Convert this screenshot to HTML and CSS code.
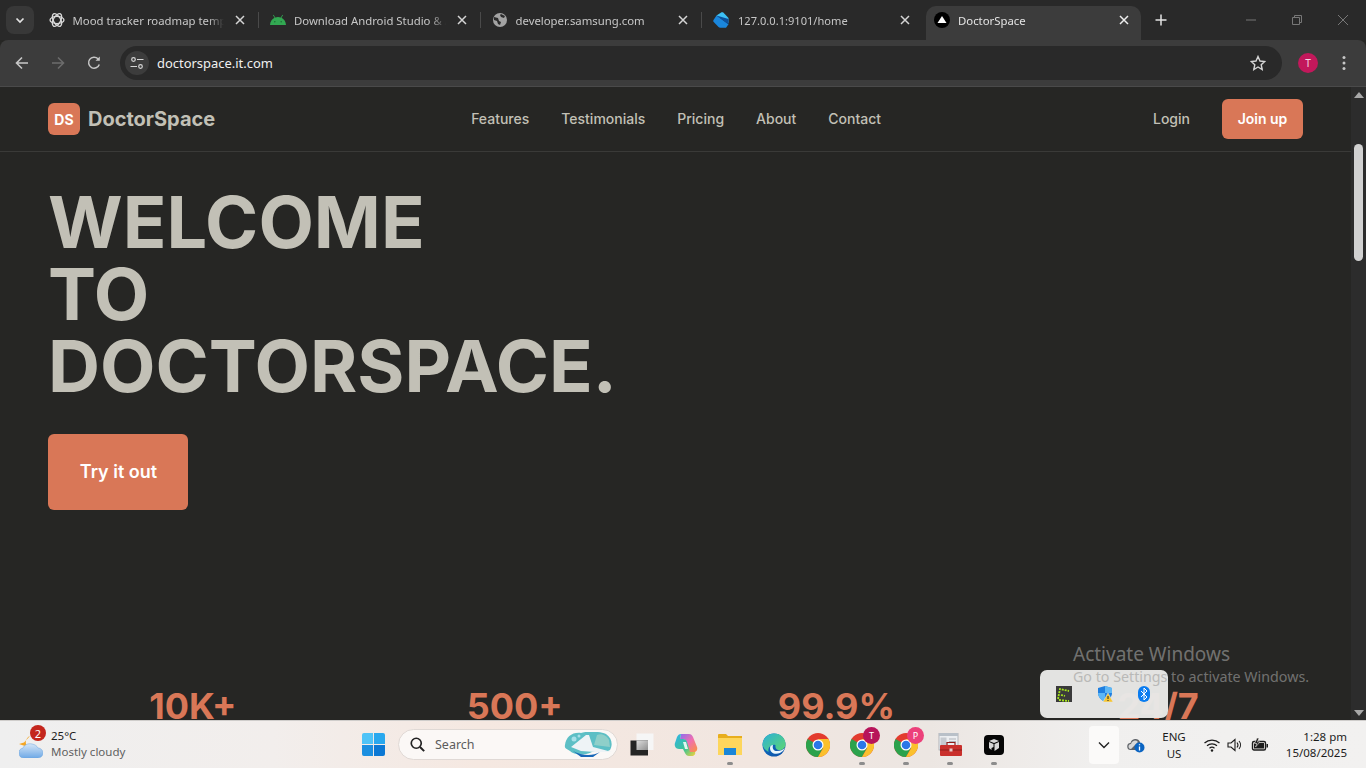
FILE: index.html
```html
<!DOCTYPE html>
<html lang="en">
<head>
<meta charset="utf-8">
<title>DoctorSpace</title>
<link rel="stylesheet" href="styles.css">
</head>
<body>
<div class="browser">
  <div class="tabstrip">
    <button class="tabsearch"><svg width="12" height="12" viewBox="0 0 12 12"><path d="M2.5 4.500 6 8l3.500-3.500" fill="none" stroke="#e3e3e3" stroke-width="1.700"/></svg></button>
    <div class="tab">
      <svg class="favicon" viewBox="0 0 16 16"><g fill="none" stroke="#d8d8d8" stroke-width="1.300"><ellipse cx="8" cy="8" rx="7" ry="3.600"/><ellipse cx="8" cy="8" rx="7" ry="3.600" transform="rotate(60 8 8)"/><ellipse cx="8" cy="8" rx="7" ry="3.600" transform="rotate(120 8 8)"/></g></svg>
      <span class="tabtitle">Mood tracker roadmap template</span>
      <svg class="tabclose" viewBox="0 0 10 10"><path d="M1 1l8 8M9 1 1 9" stroke="#d5d5d5" stroke-width="1.500"/></svg>
    </div>
    <div class="tab">
      <svg class="favicon" viewBox="0 0 16 16"><path d="M0 13c.2-3.500 2-6 4.500-7.200L3 3.200l.6-.4 1.600 2.600c1.800-.7 3.800-.7 5.600 0l1.600-2.600.6.400-1.500 2.600C14 7 15.800 9.500 16 13z" fill="#32a852"/><circle cx="4.800" cy="9.800" r=".8" fill="#1d6e35"/><circle cx="11.200" cy="9.800" r=".8" fill="#1d6e35"/></svg>
      <span class="tabtitle">Download Android Studio &amp; App Tools</span>
      <svg class="tabclose" viewBox="0 0 10 10"><path d="M1 1l8 8M9 1 1 9" stroke="#d5d5d5" stroke-width="1.500"/></svg>
    </div>
    <div class="tab">
      <svg class="favicon" viewBox="0 0 16 16"><circle cx="8" cy="8" r="7" fill="#a3a3a3"/><path d="M2 5l4 1 1 3 2 1-1 3-2-1-1-3-3-1zM9 2l4 2-1 2-3-1-1-2z" fill="#2b2b2b"/></svg>
      <span class="tabtitle">developer.samsung.com</span>
      <svg class="tabclose" viewBox="0 0 10 10"><path d="M1 1l8 8M9 1 1 9" stroke="#d5d5d5" stroke-width="1.500"/></svg>
    </div>
    <div class="tab">
      <svg class="favicon" viewBox="0 0 16 16"><path d="M3.500 3.500.5 8c-.4.600-.4 1.300 0 1.800L5.500 15c.5.5 1 .8 1.800.8H13l2.500-3.500z" fill="#1a86dc"/><path d="M3.500 3.500 8.500.3c.6-.3 1.300-.2 1.800.3L15.500 6v5z" fill="#3cc0f5"/><path d="M3.500 3.500 15.500 7v5.500z" fill="#0c4f9c"/></svg>
      <span class="tabtitle tabtitle-digits">127.0.0.1:9101/home</span>
      <svg class="tabclose" viewBox="0 0 10 10"><path d="M1 1l8 8M9 1 1 9" stroke="#d5d5d5" stroke-width="1.500"/></svg>
    </div>
    <div class="tab tab-active">
      <svg class="favicon" viewBox="0 0 16 16"><circle cx="8" cy="8" r="8" fill="#000"/><path d="M8 4l4.500 7h-9z" fill="#fff"/></svg>
      <span class="tabtitle">DoctorSpace</span>
      <svg class="tabclose" viewBox="0 0 10 10"><path d="M1 1l8 8M9 1 1 9" stroke="#eee" stroke-width="1.500"/></svg>
    </div>
    <svg class="newtab" viewBox="0 0 12 12"><path d="M6 .5v11M.5 6h11" stroke="#e3e3e3" stroke-width="1.500"/></svg>
    <div class="winctrl">
      <svg viewBox="0 0 12 12"><path d="M1 6h10" stroke="#777" stroke-width="1"/></svg>
      <svg viewBox="0 0 12 12"><path d="M1.500 3.500h7v7h-7zM3.500 3.500V1.500h7v7h-2" fill="none" stroke="#777" stroke-width="1"/></svg>
      <svg viewBox="0 0 12 12"><path d="M1 1l10 10M11 1 1 11" stroke="#777" stroke-width="1"/></svg>
    </div>
  </div>

  <div class="toolbar">
    <svg class="navicon" viewBox="0 0 16 16"><path d="M14 8H3M8 2.500 2.500 8 8 13.500" fill="none" stroke="#c7c7c7" stroke-width="1.600"/></svg>
    <svg class="navicon" viewBox="0 0 16 16"><path d="M2 8h11M8 2.500 13.500 8 8 13.500" fill="none" stroke="#6c6c6c" stroke-width="1.600"/></svg>
    <svg class="navicon" viewBox="0 0 16 16"><path d="M13.300 9.500A5.500 5.500 0 1 1 12 3.800" fill="none" stroke="#c7c7c7" stroke-width="1.500"/><path d="M13.800 1.500v4.300H9.500z" fill="#c7c7c7"/></svg>
    <div class="omnibox">
      <span class="siteinfo"><svg width="16" height="16" viewBox="0 0 16 16"><g fill="none" stroke="#d5d5d5" stroke-width="1.200"><circle cx="4.500" cy="4.500" r="1.800"/><circle cx="11.500" cy="11.500" r="1.800"/><path d="M8 4.500h6.500M1.500 11.500H8"/></g></svg></span>
      <span class="url">doctorspace.it.com</span>
      <svg class="star" viewBox="0 0 16 16"><path d="M8 1.500l2 4.500 4.800.5-3.600 3.200 1 4.800L8 12l-4.200 2.500 1-4.800L1.200 6.500 6 6z" fill="none" stroke="#d5d5d5" stroke-width="1.400"/></svg>
    </div>
    <span class="avatar">T</span>
    <svg class="kebab" viewBox="0 0 4 16"><circle cx="2" cy="2.500" r="1.500" fill="#c7c7c7"/><circle cx="2" cy="8" r="1.500" fill="#c7c7c7"/><circle cx="2" cy="13.500" r="1.500" fill="#c7c7c7"/></svg>
  </div>

  <div class="viewport">
    <main class="page">
      <header class="sitenav">
        <div class="brand"><span class="brandmark">DS</span><span class="brandname">DoctorSpace</span></div>
        <nav class="links">
          <a>Features</a><a>Testimonials</a><a>Pricing</a><a>About</a><a>Contact</a>
        </nav>
        <div class="actions"><a class="login">Login</a><a class="joinup">Join up</a></div>
      </header>
      <section class="hero">
        <h1>WELCOME<br>TO<br>DOCTORSPACE.</h1>
        <a class="cta">Try it out</a>
      </section>
      <section class="stats">
        <div>10K+</div><div>500+</div><div>99.9%</div><div>24/7</div>
      </section>
    </main>
    <div class="scrollbar">
      <span class="arrow-up"></span>
      <span class="thumb"></span>
      <span class="arrow-down"></span>
    </div>
  </div>
</div>

<footer class="taskbar">
  <div class="weather">
    <svg class="weathericon" viewBox="0 0 24 26"><defs><linearGradient id="cloudfill" x1="0" y1="0" x2="0" y2="1"><stop offset="0" stop-color="#d5e6f7"/><stop offset="1" stop-color="#6fa9e6"/></linearGradient></defs><path d="M11 4a6.500 6.500 0 0 0-2 11L0 12l5-1.500z" fill="#f5a623"/><path d="M5 26a5 5 0 0 1-1-9.900C5 13 9 11 13 12c3 .5 5 2 6 4a5 5 0 0 1 0 10z" fill="url(#cloudfill)" stroke="#6aa5de" stroke-width=".5"/></svg>
    <span class="badge">2</span>
    <div class="weathertext"><span class="temp">25°C</span><span class="cond">Mostly cloudy</span></div>
  </div>
  <div class="apps">
    <svg class="start" viewBox="0 0 24 24"><path d="M0 2a2 2 0 0 1 2-2h9.500v11.500H0z" fill="#4fc3f7"/><path d="M12.500 0H22a2 2 0 0 1 2 2v9.500H12.500z" fill="#29a8ee"/><path d="M0 12.500h11.500V24H2a2 2 0 0 1-2-2z" fill="#1b8fe0"/><path d="M12.500 12.500H24V22a2 2 0 0 1-2 2h-9.500z" fill="#0b78d4"/></svg>
    <div class="searchbox">
      <svg width="15" height="15" viewBox="0 0 18 18"><circle cx="7.500" cy="7.500" r="6" fill="none" stroke="#222" stroke-width="2"/><path d="M12 12l5 5" stroke="#222" stroke-width="2.400"/></svg>
      <span class="searchlabel">Search</span>
      <svg class="searchart" width="50" height="25" viewBox="0 0 50 25"><path d="M1 13C2 5 8 0 17 1c5-2 18-2 25 1 6 4 7 11 4 16-6 3-12 1-18 2-9 4-18 3-22-1-2-2-6-2-5-6z" fill="#5dbfc5"/><path d="M7 15 22 3l3 0 4 12 19 5-17 0-14-1z" fill="#eef3f6"/><path d="M33 3c5-2 10 1 12 5l1 7-16-2z" fill="#8fcfc9"/><path d="M9 19c9 5 20 5 27 1l-7 5H17z" fill="#1968b8"/><circle cx="10" cy="7" r="2.500" fill="#a8e0e8"/><circle cx="15" cy="4" r="1.500" fill="#a8e0e8"/></svg>
    </div>
    <span class="appslot wide"><svg class="freeicon" width="24" height="24" viewBox="0 0 24 24"><defs><linearGradient id="tvmid" x1="0" y1="0" x2="1" y2="1"><stop offset="0" stop-color="#dedede"/><stop offset="1" stop-color="#8f8f8f"/></linearGradient></defs><rect x="7.500" y=".5" width="17" height="16.500" fill="#f6f6f6"/><rect x="1.500" y="7.500" width="17.500" height="15" fill="#252525"/><rect x="7.500" y="7.500" width="11.500" height="9.500" fill="url(#tvmid)"/></svg></span>
    <span class="appslot wide"><svg width="24" height="22" viewBox="0 0 24 22"><defs><linearGradient id="cop1" x1="0" y1="0" x2="1" y2="1"><stop offset="0" stop-color="#2fb4ea"/><stop offset=".6" stop-color="#3fc48f"/><stop offset="1" stop-color="#f6d33c"/></linearGradient><linearGradient id="cop2" x1="0" y1="0" x2="1" y2="1"><stop offset="0" stop-color="#8a6df0"/><stop offset=".5" stop-color="#f06fb0"/><stop offset="1" stop-color="#f9963c"/></linearGradient></defs><path d="M7 0h8c2 0 3 1 4 3l4 10c1 3-1 5-3 5h-5l-3-10c-.5-2-1.500-3-3.500-3H6z" fill="url(#cop2)"/><path d="M7 0C5 0 4 1 3 3L1 9c-1 3 1 6 4 6h4l2 4c1 2 2 3 4 3h3c2 0 4-2 3-4h-5l-3-10C12.500 6 11 5 9 5H6z" fill="url(#cop1)"/><path d="M9 8h3l2 7h-3z" fill="#fff" opacity=".85"/></svg></span>
    <span class="appslot running"><svg width="24" height="21" viewBox="0 0 24 21"><path d="M0 1a1 1 0 0 1 1-1h7l2 2h14v19H0z" fill="#e8ae1e"/><rect x="0" y="4" width="24" height="17" fill="#fdd65c"/><rect x="6" y="14" width="12" height="7" fill="#1a86d8"/></svg></span>
    <span class="appslot"><svg width="24" height="24" viewBox="0 0 24 24"><defs><linearGradient id="edge1" x1="0" y1="0" x2="1" y2="1"><stop offset="0" stop-color="#0f74c8"/><stop offset="1" stop-color="#0c4fa4"/></linearGradient><linearGradient id="edge2" x1="0" y1="0" x2="1" y2="1"><stop offset="0" stop-color="#2cb0d8"/><stop offset="1" stop-color="#5fd86d"/></linearGradient></defs><circle cx="12" cy="12" r="11.500" fill="url(#edge1)"/><path d="M.5 11C1.500 4.500 6 .5 12 .5c7 0 11.500 5 11.500 10.500 0 4-3 6-6 6-3 0-4.500-2-4-5-4-1-8 2-7 7C3 17 .5 14 .5 11z" fill="url(#edge2)"/><path d="M8 15c0 5 5 7 10 5 2-1 4-3 5-5-2 2-5 3-8 3-3 0-5-2-4-6-2 0-3 1-3 3z" fill="#e9f6fb"/></svg></span>
    <span class="appslot"><svg class="chrome" viewBox="0 0 24 24"><circle cx="12" cy="12" r="12" fill="#e33b2e"/><path d="M12 12 1.600 6A12 12 0 0 0 12 24l5-9z" fill="#2ba24c"/><path d="M12 6h10.400A12 12 0 0 1 12 24l5.200-9z" fill="#fbc02d"/><circle cx="12" cy="12" r="5.500" fill="#fff"/><circle cx="12" cy="12" r="4.300" fill="#2a77e8"/></svg></span>
    <span class="appslot running"><svg class="chrome" viewBox="0 0 24 24"><circle cx="12" cy="12" r="12" fill="#e33b2e"/><path d="M12 12 1.600 6A12 12 0 0 0 12 24l5-9z" fill="#2ba24c"/><path d="M12 6h10.400A12 12 0 0 1 12 24l5.200-9z" fill="#fbc02d"/><circle cx="12" cy="12" r="5.500" fill="#fff"/><circle cx="12" cy="12" r="4.300" fill="#2a77e8"/></svg><span class="profile profile-t">T</span></span>
    <span class="appslot running"><svg class="chrome" viewBox="0 0 24 24"><circle cx="12" cy="12" r="12" fill="#e33b2e"/><path d="M12 12 1.600 6A12 12 0 0 0 12 24l5-9z" fill="#2ba24c"/><path d="M12 6h10.400A12 12 0 0 1 12 24l5.200-9z" fill="#fbc02d"/><circle cx="12" cy="12" r="5.500" fill="#fff"/><circle cx="12" cy="12" r="4.300" fill="#2a77e8"/></svg><span class="profile profile-p">P</span></span>
    <span class="appslot running"><svg width="24" height="24" viewBox="0 0 24 24"><rect x="1" y="0" width="19" height="17" fill="#eceef1" stroke="#9aa0a8" stroke-width=".7"/><rect x="1" y="0" width="19" height="3" fill="#b9c0c8"/><rect x="2.500" y="4.500" width="6" height="9" fill="#c6cad0"/><path d="M11 6h7M11 8.500h7" stroke="#b0b5bb"/><rect x="2" y="12" width="22" height="11" rx="1" fill="#c9302c"/><path d="M9 12V9.500h8V12" fill="none" stroke="#8e1f1c" stroke-width="1.200"/><path d="M2 17h22" stroke="#8e1f1c"/><rect x="11.500" y="15.500" width="3" height="3" fill="#e8c9c7"/></svg></span>
    <span class="appslot running"><svg width="20" height="20" viewBox="0 0 20 20"><rect width="20" height="20" rx="4" fill="#060606"/><path d="M5 6l5-2 5 2-5 2zM5 7l4.500 2v3l-2 1v2L5 13zM15 7l-4.500 2v7L15 13z" fill="#d8d8d8"/></svg></span>
  </div>
  <div class="tray">
    <button class="trayopen"><svg width="12" height="12" viewBox="0 0 12 12"><path d="M1 3.500 6 8.500l5-5" fill="none" stroke="#222" stroke-width="1.400"/></svg></button>
    <svg class="cloudinfo" width="18" height="16" viewBox="0 0 18 16"><path d="M4 13a3.500 3.500 0 0 1-.5-7A5 5 0 0 1 13 5v8z" fill="#5f6368"/><path d="M4 12a2.500 2.500 0 0 1 0-5 4 4 0 0 1 7-2" fill="#d8d8d8"/><circle cx="12.500" cy="10.500" r="5" fill="#0a64c2"/><path d="M12.500 9.500v4M12.500 7.200v1" stroke="#fff" stroke-width="1.300"/></svg>
    <div class="lang"><span>ENG</span><span>US</span></div>
    <div class="sysicons">
      <svg width="16" height="14" viewBox="0 0 16 14"><g fill="none" stroke="#1c1c1c" stroke-width="1.200"><path d="M.5 5a11 11 0 0 1 15 0M3 7.700a7.500 7.500 0 0 1 10 0M5.500 10.200a3.800 3.800 0 0 1 5 0"/></g><circle cx="8" cy="12.500" r="1.200" fill="#1c1c1c"/></svg>
      <svg width="16" height="14" viewBox="0 0 16 14"><path d="M1 5h3l4-3.500v11L4 9H1z" fill="none" stroke="#1c1c1c" stroke-width="1.100"/><path d="M10 4.500c1.200 1.500 1.200 3.500 0 5M12 3c2 2.300 2 5.700 0 8" fill="none" stroke="#1c1c1c" stroke-width="1.100"/></svg>
      <svg class="battery" width="18" height="14" viewBox="0 0 18 14"><rect x="1.500" y="3.500" width="13" height="8.500" rx="1.500" fill="#f2eeeb" stroke="#1c1c1c" stroke-width="1.400"/><rect x="3" y="5" width="10" height="5.500" fill="#1c1c1c"/><rect x="15.500" y="6" width="1.500" height="3.500" fill="#1c1c1c"/><path d="M6 0 3.500 5.500H6L4.500 9 9 4H6.500L8 0z" fill="#1c1c1c" stroke="#f2eeeb" stroke-width=".6"/></svg>
    </div>
    <div class="clock"><span>1:28 pm</span><span>15/08/2025</span></div>
  </div>
</footer>

<div class="trayflyout">
  <svg width="16" height="16" viewBox="0 0 16 16"><rect width="16" height="16" fill="#3a3a3a"/><path d="M2 13 4 3l9 2M5 9l4 1M3 14l10 1" fill="none" stroke="#a6e61c" stroke-width="1.800" stroke-dasharray="2 1"/></svg>
  <svg width="16" height="16" viewBox="0 0 16 16"><path d="M8 0l7 2v5c0 4-3 7-7 9-4-2-7-5-7-9V2z" fill="#1f7fe0"/><path d="M8 0l7 2v5H8zM1 7h7v9C4 14 1 11 1 7z" fill="#5db7f5"/><path d="M11 7l5 9H6z" fill="#f7c52d" stroke="#e6e6e6" stroke-width=".5"/><path d="M11 10v3M11 14v1" stroke="#222" stroke-width="1"/></svg>
  <svg width="12" height="16" viewBox="0 0 12 16"><rect width="12" height="16" rx="6" fill="#0a7cf0"/><path d="M3 5l6 6-3 3V2l3 3-6 6" fill="none" stroke="#fff" stroke-width="1"/></svg>
</div>
<div class="watermark">
  <div class="wm-title">Activate Windows</div>
  <div class="wm-sub"><span class="wm-over">Go to Settings</span> to activate Windows.</div>
</div>
</body>
</html>
```

FILE: styles.css
```css
* { box-sizing: border-box; }
html, body { margin: 0; padding: 0; height: 768px; overflow: hidden; background: #262624; }
body { display: flex; flex-direction: column; position: relative; width: 1366px; font-family: "Noto Sans", "Open Sans", sans-serif; }
button { border: 0; padding: 0; background: none; }

.browser { height: 720px; display: flex; flex-direction: column; flex: none; }

/* tab strip */
.tabstrip { height: 40px; flex: none; background: #292929; display: flex; align-items: flex-end; padding-left: 6px; position: relative; }
.tabsearch { width: 28px; height: 28px; margin-bottom: 6px; margin-right: 2.500px; border-radius: 8px; background: #383838; display: flex; align-items: center; justify-content: center; }
.tab { width: 221.500px; height: 34px; display: flex; align-items: center; padding: 0 12px 6px; color: #c7c7c7; font-size: 11.350px; position: relative; }
.tab + .tab::before { content: ""; position: absolute; left: 0; top: 6px; height: 16px; width: 1px; background: #4a4a4a; }
.favicon { width: 16px; height: 16px; flex: none; margin-right: 8px; }
.tabtitle { flex: 1; white-space: nowrap; overflow: hidden; -webkit-mask-image: linear-gradient(to right, #000 90%, transparent 100%); mask-image: linear-gradient(to right, #000 90%, transparent 100%); }
.tabtitle-digits { font-size: 11.100px; padding-left: 1px; }
.tabclose { width: 10px; height: 10px; flex: none; margin-left: 11px; margin-right: 1px; }
.tab-active { width: 215px; margin-left: 3.500px; padding: 0 11px 6px 8px; background: #3c3c3c; border-radius: 10px 10px 0 0; color: #e3e3e3; }
.tab-active::before { display: none; }
.newtab { width: 12px; height: 12px; margin: 0 0 14px 14px; flex: none; }
.winctrl { position: absolute; right: 17px; top: 14px; display: flex; gap: 34px; }
.winctrl svg { width: 12px; height: 12px; }

/* toolbar */
.toolbar { height: 47px; flex: none; background: #3c3c3c; border-bottom: 1px solid #4a4a4a; border-radius: 8px 8px 0 0; padding: 6px 0 6px 14px; display: flex; align-items: center; }
.navicon { width: 16px; height: 16px; flex: none; margin-right: 20px; }
.navicon:nth-child(3) { margin-right: 18px; }
.omnibox { width: 1162px; height: 34px; background: #292929; border-radius: 17px; display: flex; align-items: center; padding: 0 16px 0 5px; }
.siteinfo { width: 24px; height: 24px; border-radius: 50%; background: #3c3c3c; display: flex; align-items: center; justify-content: center; flex: none; margin-right: 8px; }
.url { flex: 1; color: #f0f0f0; font-size: 12.950px; }
.star { width: 16px; height: 16px; flex: none; }
.avatar { width: 20px; height: 20px; border-radius: 50%; background: #c2185b; color: #f5d6e2; font-size: 10px; display: flex; align-items: center; justify-content: center; margin-left: 16px; flex: none; }
.kebab { width: 4px; height: 16px; margin-left: 24px; flex: none; }

/* page */
.viewport { flex: 1; min-height: 0; display: flex; background: #262624; }
.page { flex: 1; min-width: 0; overflow: hidden; font-family: Inter, sans-serif; color: #c2c0b6; }
.sitenav { height: 65px; padding: 0 48px; border-bottom: 1px solid #3a3a38; display: flex; align-items: center; justify-content: space-between; }
.brand { display: flex; align-items: center; gap: 8px; }
.brandmark { width: 32px; height: 32px; border-radius: 6px; background: #d97757; color: #fff; font-weight: 700; font-size: 14px; display: flex; align-items: center; justify-content: center; }
.brandname { font-size: 20px; font-weight: 700; }
.links { display: flex; gap: 32px; font-size: 14px; font-weight: 500; padding-bottom: 2px; }
.actions { display: flex; align-items: center; gap: 16px; font-size: 14px; font-weight: 500; }
.login { padding: 0 16px 2px; }
.joinup { width: 81px; height: 40px; padding-bottom: 2px; display: flex; align-items: center; justify-content: center; border-radius: 6px; background: #d97757; color: #fff; font-weight: 600; }
.hero { padding: 34px 48px 0; }
.hero h1 { margin: 0 0 32px; font-size: 72px; line-height: 72px; font-weight: 700; }
.cta { width: 140px; height: 76px; padding: 0 0 2px 1px; display: flex; align-items: center; justify-content: center; border-radius: 6px; background: #d97757; color: #fff; font-size: 18px; font-weight: 600; }
.stats { margin-top: 176px; padding: 0 48px; display: grid; grid-template-columns: repeat(4, 1fr); gap: 32px; color: #d97757; font-size: 36px; font-weight: 700; line-height: 40px; text-align: center; }

/* scrollbar */
.scrollbar { width: 15px; flex: none; background: #2c2c2c; position: relative; }
.thumb { position: absolute; left: 3px; top: 57px; width: 9px; height: 117px; border-radius: 5px; background: #d1d1d1; }
.arrow-up, .arrow-down { position: absolute; left: 3px; width: 0; height: 0; border-left: 5px solid transparent; border-right: 5px solid transparent; }
.arrow-up { top: 5px; border-bottom: 6px solid #a8a8a8; }
.arrow-down { bottom: 4px; border-top: 6px solid #a8a8a8; }

/* taskbar */
.taskbar { height: 48px; flex: none; position: relative; display: flex; align-items: center; border-top: 1px solid #cfcdcb; background: linear-gradient(90deg, #efefef 0%, #f2eeec 20%, #f5e8e1 35%, #f1e6e0 55%, #ece6e2 68%, #f0efee 80%, #f2f1f0 100%); color: #1c1c1c; font-family: "Noto Sans", "Open Sans", sans-serif; }
.weather { width: 362px; padding-left: 19px; display: flex; align-items: center; position: relative; flex: none; }
.weathericon { width: 24px; height: 26px; flex: none; margin-right: 8px; }
.badge { position: absolute; left: 30px; top: -4px; width: 16px; height: 16px; border-radius: 50%; background: #c4261d; color: #fff; font-size: 11px; display: flex; align-items: center; justify-content: center; }
.weathertext { display: flex; flex-direction: column; font-size: 11.500px; line-height: 16px; margin-top: -1px; }
.cond { color: #5f5f5f; }
.apps { display: flex; align-items: center; flex: none; }
.start { width: 23px; height: 23px; flex: none; margin-right: 13px; }
.searchbox { width: 220px; height: 31px; border-radius: 16px; background: #fbf8f6; border: 1px solid #e0d9d5; display: flex; align-items: center; padding: 0 3px 0 11px; }
.searchlabel { flex: 1; margin-left: 10px; font-size: 12.500px; color: #5c5c5c; }
.searchart { flex: none; }
.appslot { width: 44px; height: 44px; display: flex; align-items: center; justify-content: center; position: relative; flex: none; }
.appslot.wide { width: 45px; }
.freeicon { overflow: visible; }
.appslot.running::after { content: ""; position: absolute; left: 19px; bottom: 2px; width: 6px; height: 3px; border-radius: 2px; background: #8c8c8c; }
.chrome { width: 24px; height: 24px; }
.profile { position: absolute; left: 23px; top: 4px; width: 17px; height: 17px; border-radius: 50%; color: #fff; font-size: 9px; display: flex; align-items: center; justify-content: center; }
.profile-t { background: #b7145a; }
.profile-p { background: #ec407a; }
.tray { position: absolute; right: 0; top: 0; width: 277px; height: 47px; display: flex; align-items: center; }
.trayopen { width: 30px; height: 38px; border-radius: 4px; background: #fbfaf9; display: flex; align-items: center; justify-content: center; flex: none; margin-right: 8px; }
.cloudinfo { flex: none; margin-right: 7px; }
.lang { width: 44px; display: flex; flex-direction: column; align-items: center; font-size: 11.500px; line-height: 17px; flex: none; }
.sysicons { display: flex; align-items: center; gap: 7px; margin-left: 8px; }
.battery { margin-left: 1px; }
.clock { flex: 1; padding-right: 19px; display: flex; flex-direction: column; align-items: flex-end; font-size: 11.500px; line-height: 16px; }

/* overlays */
.trayflyout { position: absolute; left: 1040px; top: 670px; width: 128px; height: 48px; border-radius: 7px; background: rgba(232,232,230,.98); display: flex; align-items: center; gap: 25px; padding-left: 16px; }
.watermark { position: absolute; left: 1073px; top: 641px; color: rgba(255,255,255,.36); pointer-events: none; }
.wm-title { font-size: 19px; line-height: 26px; }
.wm-sub { font-size: 14.250px; line-height: 20px; }
.wm-over { color: #b9b9b7; }
```
